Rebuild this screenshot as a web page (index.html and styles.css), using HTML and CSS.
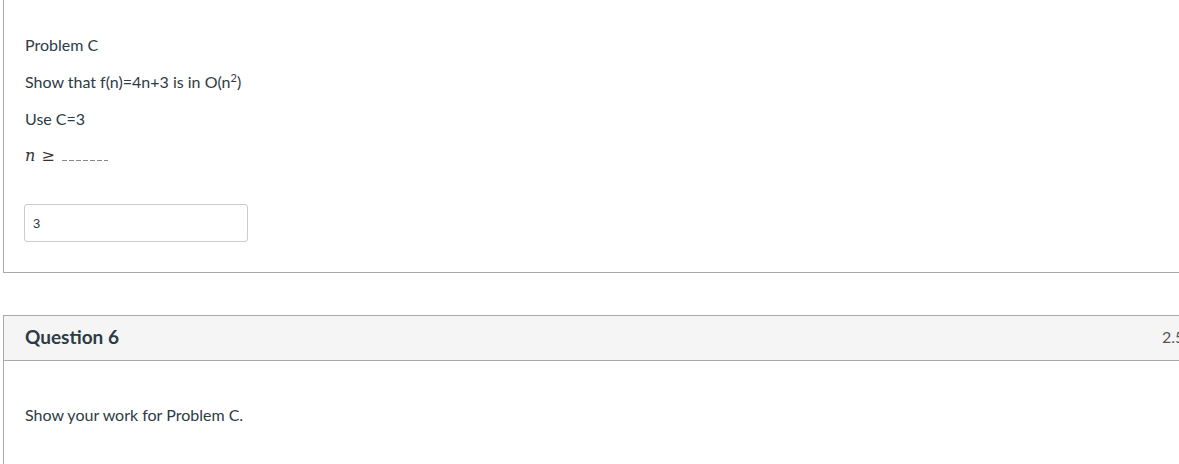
FILE: index.html
```html
<!DOCTYPE html>
<html>
<head>
<meta charset="utf-8">
<link rel="stylesheet" href="styles.css">
</head>
<body>
<div class="page">
  <div class="question first">
    <div class="q-body top-body">
      <p class="line">Problem C</p>
      <p class="line">Show that f(n)=4n+3 is in O(n<sup>2</sup>)</p>
      <p class="line">Use C=3</p>
      <p class="line math"><span class="mi">n</span><span class="mo">≥</span><span class="blank"></span></p>
      <div class="answer-wrap"><input class="answer" type="text" value="3"></div>
    </div>
  </div>
  <div class="question second">
    <div class="q-header">
      <span class="q-title">Question 6</span>
      <span class="q-points">2.5 pts</span>
    </div>
    <div class="q-body">
      <p class="line">Show your work for Problem C.</p>
    </div>
  </div>
</div>
</body>
</html>
```
FILE: styles.css
```css
html, body {
  margin: 0;
  padding: 0;
  background: #fff;
  overflow: hidden;
}
body {
  font-family: Lato, "Liberation Sans", sans-serif;
  color: #2d3b45;
  font-size: 16px;
}
.page {
  padding-left: 3px;
  width: 1229px;
}
.question {
  border: 1px solid #aaaaaa;
  background: #fff;
}
.question.first {
  border-top: none;
  height: 273px;
  box-sizing: border-box;
}
.question.second {
  margin-top: 42px;
}
.top-body {
  padding: 33px 21px 0 21px;
}
.line {
  margin: 0;
  line-height: 24px;
  color: #2d3b45;
}
.top-body .line {
  margin-bottom: 13px;
}
sup {
  font-size: 11px;
  vertical-align: 6px;
  line-height: 0;
}
.math {
  font-family: "DejaVu Serif", "Liberation Serif", serif;
  display: flex;
  align-items: baseline;
}
.top-body .math {
  margin-bottom: 0;
}
.mi {
  font-style: italic;
  font-size: 16px;
  color: #333;
}
.mo {
  font-size: 16px;
  margin-left: 6px;
  color: #333;
}
.blank {
  display: inline-block;
  width: 46px;
  height: 1px;
  margin-left: 7px;
  background: repeating-linear-gradient(to right, #888 0 5px, transparent 5px 7px);
}
.answer-wrap {
  margin-top: 36px;
  margin-left: -1px;
}
.answer {
  display: block;
  width: 224px;
  height: 38px;
  box-sizing: border-box;
  border: 1px solid #c7cdd1;
  border-radius: 3px;
  padding: 0 8px;
  font-family: "Liberation Sans", Arial, sans-serif;
  font-size: 13px;
  color: #2d3b45;
  background: #fff;
  outline: none;
}
.q-header {
  background: #f5f5f5;
  border-bottom: 1px solid #aaaaaa;
  height: 45px;
  box-sizing: border-box;
  display: flex;
  align-items: center;
  justify-content: space-between;
  padding: 0 21px 3px 21px;
}
.q-title {
  font-weight: bold;
  font-size: 19px;
  color: #2d3b45;
}
.q-points {
  font-size: 16px;
  color: #555;
  white-space: nowrap;
}
.second .q-body {
  padding: 42px 21px 60px 21px;
}
```
